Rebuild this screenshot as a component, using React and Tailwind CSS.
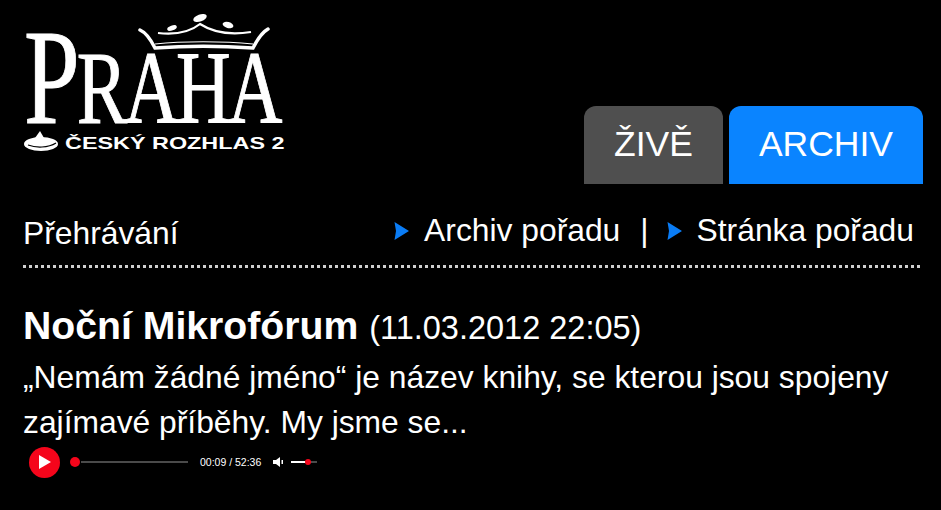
import React from 'react';

const sans = "font-['Liberation_Sans',Arial,sans-serif]";

function Arrow() {
  return (
    <svg width="15" height="18" viewBox="0 0 15 18" className="shrink-0">
      <path d="M0.5 0 L15 9 L0.5 18 L2 9 Z" fill="#0a7cf5" />
    </svg>
  );
}

function Logo() {
  return (
    <div className="relative w-[300px] h-[184px] text-white font-['Liberation_Serif',serif]">
      <svg width="132" height="40" viewBox="0 0 132 40" className="absolute left-[138px] top-[13px]" fill="none" stroke="#fff">
        <path d="M2 17 C9 20 13 27 17 35 C45 33 85 33 115 35 C119 27 123 20 130 16" strokeWidth="3.5" strokeLinecap="round" />
        <path d="M17 31 C45 28 85 28 115 31" strokeWidth="1.2" />
        <path d="M20 20 C38 22 52 19 62 11 C76 20 94 22 113 19" strokeWidth="2.2" />
        <g fill="#fff" stroke="none">
          <ellipse cx="62" cy="5" rx="7" ry="3.5" transform="rotate(-20 62 5)" />
          <ellipse cx="34" cy="15" rx="5" ry="2.5" transform="rotate(-20 34 15)" />
          <ellipse cx="90" cy="12" rx="5.5" ry="3" transform="rotate(15 90 12)" />
        </g>
      </svg>
      <div className="absolute left-[24px] top-[26px] flex items-baseline leading-[0.75] origin-left scale-x-[0.735] [-webkit-text-stroke:1px_white]">
        <span className="text-[136px] tracking-[-4px]">P</span>
        <span className="text-[103px] tracking-[-4px]">RAHA</span>
      </div>
      <svg width="35" height="22" viewBox="0 0 35 22" className="absolute left-[24px] top-[130px]" fill="#fff">
        <ellipse cx="17" cy="14" rx="17" ry="7" />
        <path d="M11 8 L16 1 L20 8 Z" />
        <path d="M4 15 C12 18 24 18 32 13" stroke="#000" strokeWidth="1.2" fill="none" />
      </svg>
      <div className={`absolute left-[65px] top-[134px] text-[17px] leading-[20px] font-bold whitespace-nowrap origin-left scale-x-[1.375] ${sans}`}>
        ČESKÝ ROZHLAS 2
      </div>
    </div>
  );
}

function Player() {
  return (
    <div className="flex items-center h-[30px] mt-[2px] ml-[29px] text-white">
      <div className="flex items-center justify-center w-[31px] h-[31px] rounded-full bg-[#f5051b]">
        <svg width="13" height="14" viewBox="0 0 13 14" className="ml-[1px]"><path d="M0 0 L12 7 L0 14 Z" fill="#fff" /></svg>
      </div>
      <div className="ml-[10px] w-[10px] h-[10px] rounded-full bg-[#f5051b]" />
      <div className="ml-[1px] w-[107px] h-[2px] bg-[#4a4a4a]" />
      <span className={`ml-[12px] text-[10.5px] leading-none whitespace-nowrap ${sans}`}>00:09 / 52:36</span>
      <svg width="10" height="10" viewBox="0 0 10 10" className="ml-[12px]"><path d="M0 3 H3 L7 0 V10 L3 7 H0 Z M8.5 3 V7 H10 V3 Z" fill="#fff" /></svg>
      <div className="relative ml-[8px] w-[26px] h-[2px] bg-[#4a4a4a]">
        <div className="w-[15px] h-full bg-white" />
        <div className="absolute left-[14px] -top-[2px] w-[6px] h-[6px] rounded-full bg-[#f5051b]" />
      </div>
    </div>
  );
}

export default function App() {
  return (
    <div className={`w-[941px] h-[510px] bg-black text-white overflow-hidden ${sans}`}>
      <header className="flex justify-between items-end h-[184px] pr-[18px]">
        <Logo />
        <nav className="flex gap-[6px] text-[35.5px] leading-none">
          <div className="flex items-center justify-center w-[139px] h-[78px] rounded-t-[12px] bg-[#4f4f4f]">ŽIVĚ</div>
          <div className="flex items-center justify-center w-[194px] h-[78px] rounded-t-[12px] bg-[#0a84ff]">ARCHIV</div>
        </nav>
      </header>

      <div className="flex justify-between items-center h-[84px] ml-[23px] mr-[21px] border-b-[3px] border-dotted border-[#cfcfcf] text-[31.8px]">
        <span className="mt-[18px]">Přehrávání</span>
        <div className="flex items-center mr-[6px] mt-[13px]">
          <Arrow />
          <span className="ml-[15px]">Archiv pořadu</span>
          <span className="ml-[20px]">|</span>
          <span className="ml-[18px]"><Arrow /></span>
          <span className="ml-[15px]">Stránka pořadu</span>
        </div>
      </div>

      <main className="mt-[37px]">
        <h1 className="ml-[23px] text-[39.2px] leading-[42px] font-bold">
          Noční Mikrofórum <span className="text-[32.5px] font-normal">(11.03.2012 22:05)</span>
        </h1>
        <p className="ml-[23px] mt-[6px] text-[31.8px] leading-[45px] w-[900px]">
          „Nemám žádné jméno“ je název knihy, se kterou jsou spojeny zajímavé příběhy. My jsme se...
        </p>
        <Player />
      </main>
    </div>
  );
}
